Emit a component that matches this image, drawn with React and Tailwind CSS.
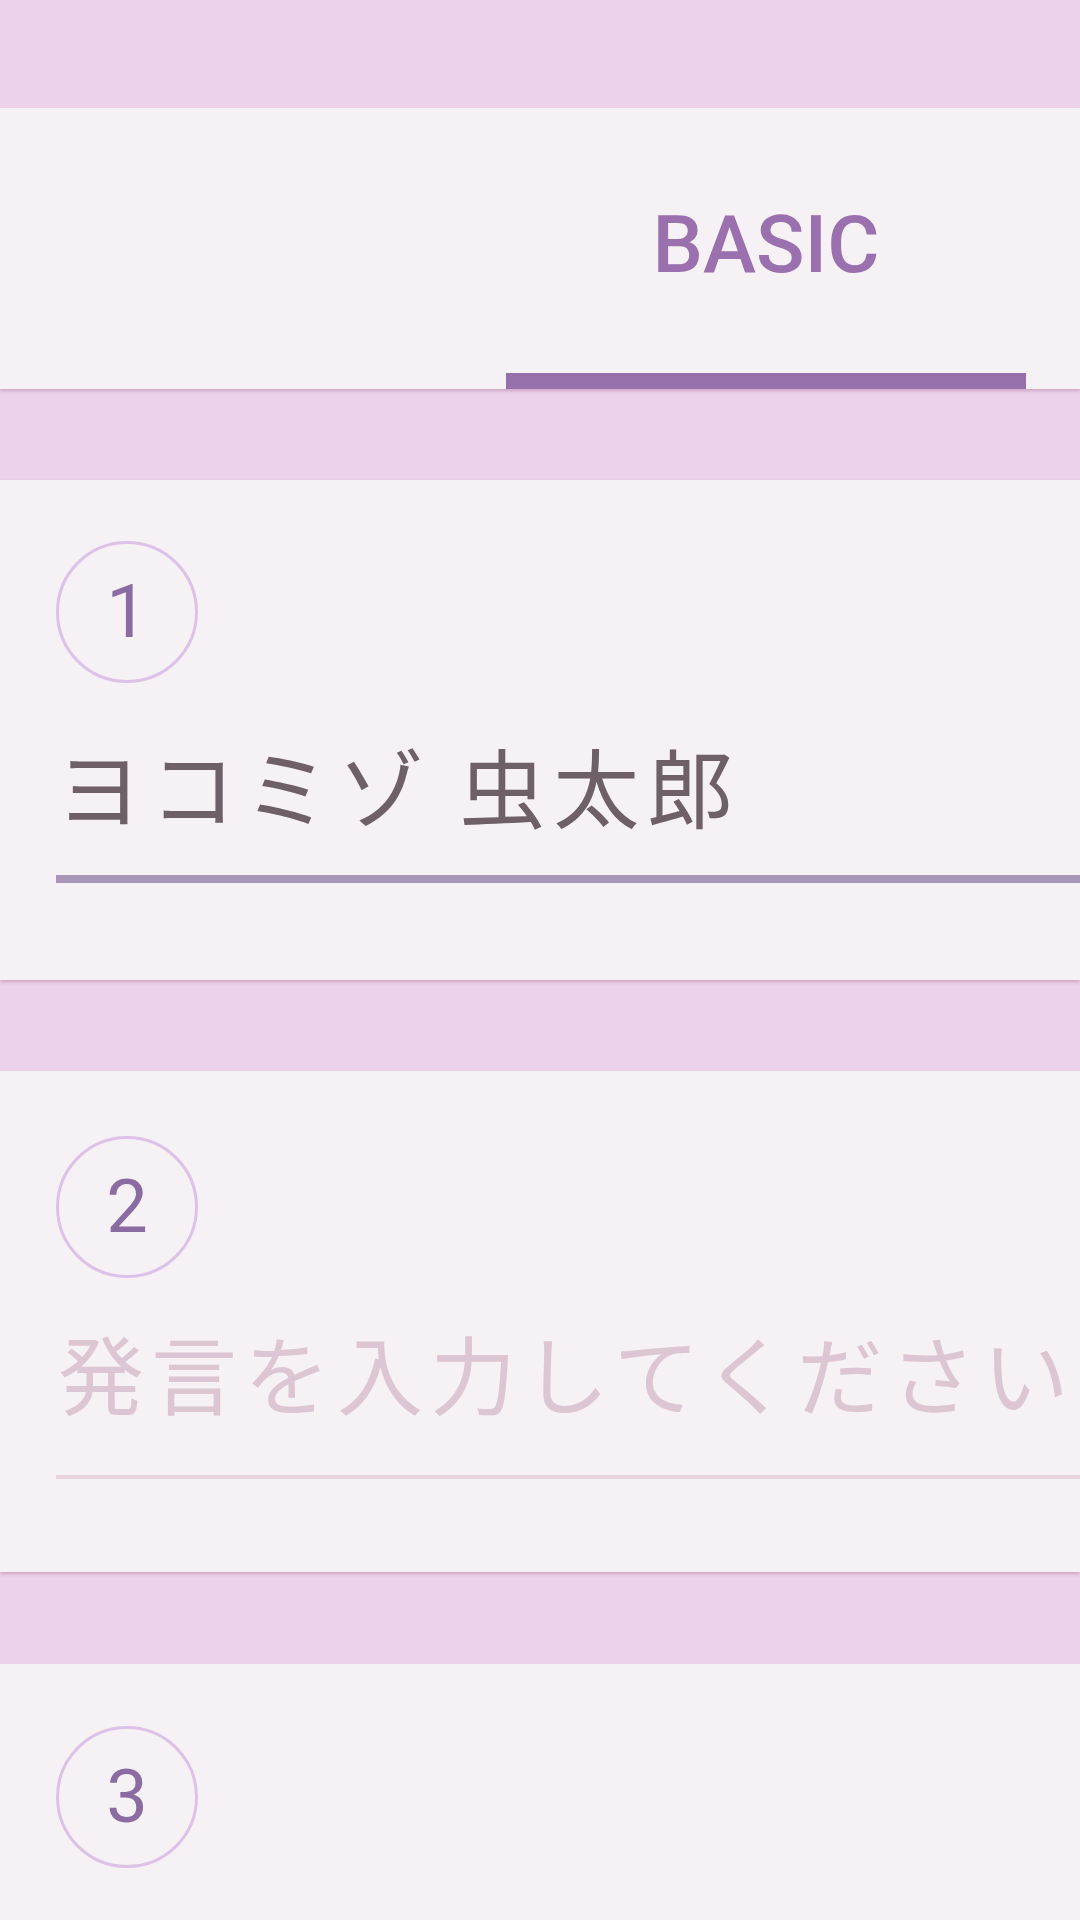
export default function App() {
  const jp = { fontFamily: '"Noto Sans CJK JP", "Noto Sans", sans-serif' };
  const Circle = ({ n }) => (
    <div className="w-[142px] h-[142px] rounded-full border-[3px] border-[#dcc2e6] flex items-center justify-center">
      <span className="text-[74px] leading-none text-[#8a6ca2]" style={{ fontFamily: 'Roboto, "Liberation Sans", sans-serif' }}>{n}</span>
    </div>
  );
  return (
    <div className="w-[1080px] h-[1920px] overflow-hidden bg-[#ecd2ea] flex flex-col">
      <div className="h-[108px] shrink-0" />
      <div className="h-[281px] shrink-0 bg-[#f6f1f4] shadow-[0_2px_3px_rgba(170,110,150,0.45)] relative z-10 flex">
        <div className="ml-[506px] w-[520px] flex flex-col">
          <div className="flex-1 flex items-center justify-center pt-[8px]">
            <span className="text-[80px] font-medium leading-none text-[#9a70ae]" style={{ fontFamily: 'Roboto, "Liberation Sans", sans-serif' }}>BASIC</span>
          </div>
          <div className="h-[16px] bg-[#9670aa]" />
        </div>
      </div>
      <div className="h-[91px] shrink-0" />
      <div className="h-[500px] shrink-0 bg-[#f6f1f4] shadow-[0_2px_3px_rgba(170,110,150,0.45)] relative z-10 pl-[56px] pt-[61px]">
        <Circle n="1" />
        <div className="mt-[50px] border-b-[8px] border-[#a897b8] pb-[39px] whitespace-nowrap">
          <span className="text-[86px] leading-[1.2] text-[#6e6068] tracking-[8px]" style={jp}>ヨコミゾ 虫太郎</span>
        </div>
      </div>
      <div className="h-[91px] shrink-0" />
      <div className="h-[501px] shrink-0 bg-[#f6f1f4] shadow-[0_2px_3px_rgba(170,110,150,0.45)] relative z-10 pl-[56px] pt-[65px]">
        <Circle n="2" />
        <div className="mt-[42px] border-b-[4px] border-[#e8d5df] pb-[52px] pl-[2px] whitespace-nowrap">
          <span className="text-[86px] leading-[1.2] text-[#ddc6d3] tracking-[7px]" style={jp}>発言を入力してください</span>
        </div>
      </div>
      <div className="h-[92px] shrink-0" />
      <div className="flex-1 bg-[#f6f1f4] pl-[56px] pt-[62px]">
        <Circle n="3" />
      </div>
    </div>
  );
}
